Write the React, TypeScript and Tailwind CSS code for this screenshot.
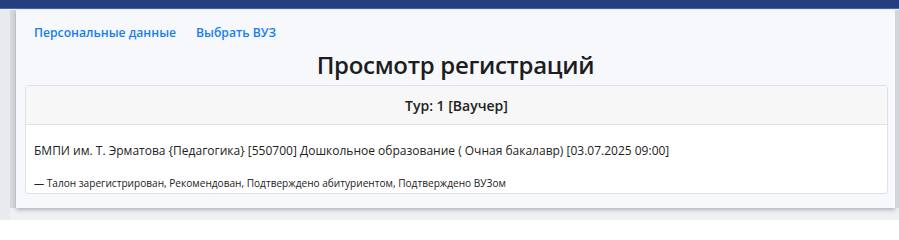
import React from "react";

export default function App() {
  return (
    <div
      className="w-[899px] h-[220px] overflow-hidden bg-[#eef0f4] flex flex-col"
      style={{ fontFamily: '"Open Sans", "Noto Sans", sans-serif' }}
    >
      <div className="h-[9px] shrink-0 bg-[#243f80] border-b border-[#4a64a3]" />
      <div className="flex flex-1 pt-[1px]">
        <div className="w-[10px] shrink-0 bg-[#e9eaee]" />
        <div className="w-[6px] shrink-0 bg-[#d6d7da] mb-[12px]" />
        <div className="w-[879px] shrink-0 h-[198px] bg-[#f7f8fc] shadow-[0_2px_4px_rgba(0,0,0,0.25)] flex flex-col">
          <div className="flex gap-[20px] pl-[18px] pt-[14px] text-[12.2px] font-semibold text-[#157ef2] leading-[18px]">
            <span>Персональные данные</span>
            <span>Выбрать ВУЗ</span>
          </div>
          <div className="text-center text-[24px] font-semibold text-[#1d1d1d] leading-[32px] mt-[7px] tracking-[-0.3px]">
            Просмотр регистраций
          </div>
          <div className="ml-[9px] mr-[7px] mt-[4px] border border-[#e2e2e4] rounded-[3px] bg-white">
            <div className="h-[39px] bg-[#f7f7f7] border-b border-[#e2e2e4] flex items-center justify-center text-[14px] font-semibold text-[#222]">
              Тур: 1 [Ваучер]
            </div>
            <div className="pl-[8px] pt-[17px] pb-[3px] text-[#222]">
              <div className="text-[12px] leading-[18px]">
                БМПИ им. Т. Эрматова {"{"}Педагогика{"}"} [550700] Дошкольное образование ( Очная бакалавр) [03.07.2025 09:00]
              </div>
              <div className="text-[10.1px] leading-[14px] mt-[16px]">
                — Талон зарегистрирован, Рекомендован, Подтверждено абитуриентом, Подтверждено ВУЗом
              </div>
            </div>
          </div>
        </div>
        <div className="w-[4px] shrink-0 bg-[#d4d5d8] mb-[12px]" />
      </div>
    </div>
  );
}
